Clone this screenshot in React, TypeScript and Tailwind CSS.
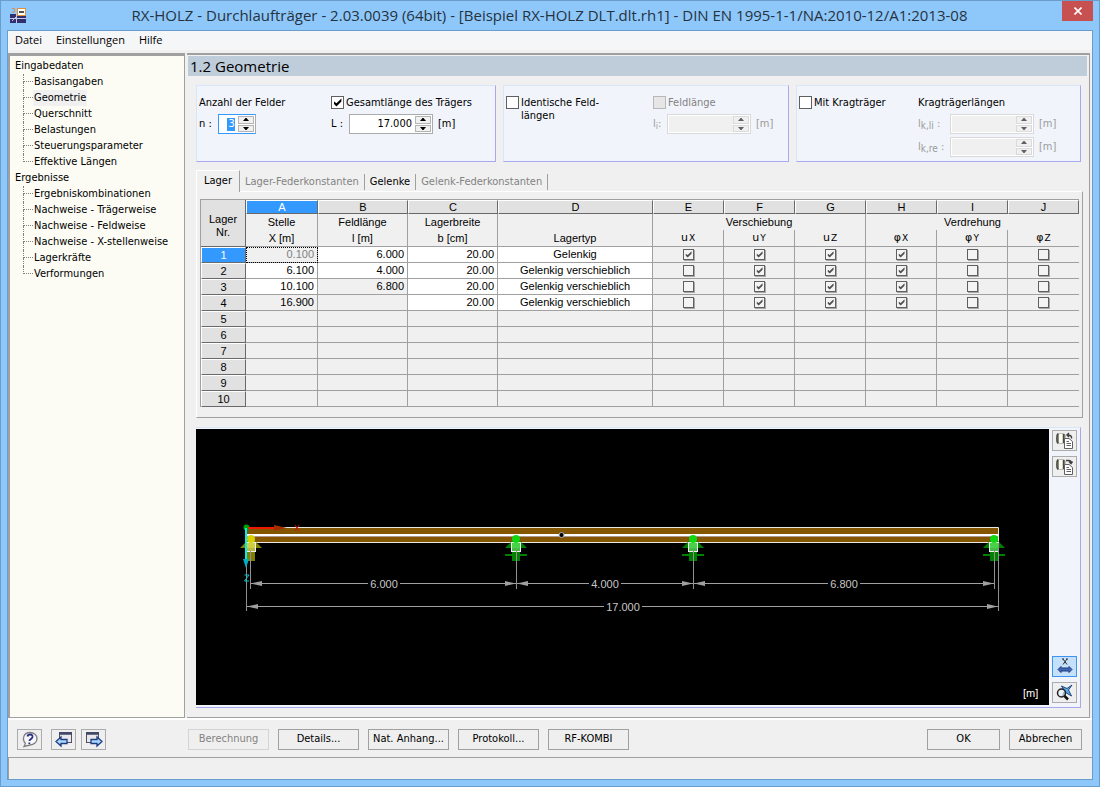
import { ReactNode } from "react";
import clsx from "clsx";

const TREE = [
  {
    label: "Eingabedaten",
    items: ["Basisangaben", "Geometrie", "Querschnitt", "Belastungen", "Steuerungsparameter", "Effektive Längen"],
  },
  {
    label: "Ergebnisse",
    items: [
      "Ergebniskombinationen",
      "Nachweise - Trägerweise",
      "Nachweise - Feldweise",
      "Nachweise - X-stellenweise",
      "Lagerkräfte",
      "Verformungen",
    ],
  },
];

interface SupportRow {
  x: string;
  span: string;
  width: string;
  type: string;
  fixed: boolean[];
}

const SUPPORTS: SupportRow[] = [
  { x: "0.100", span: "6.000", width: "20.00", type: "Gelenkig", fixed: [true, true, true, true, false, false] },
  { x: "6.100", span: "4.000", width: "20.00", type: "Gelenkig verschieblich", fixed: [false, true, true, true, false, false] },
  { x: "10.100", span: "6.800", width: "20.00", type: "Gelenkig verschieblich", fixed: [false, true, true, true, false, false] },
  { x: "16.900", span: "", width: "20.00", type: "Gelenkig verschieblich", fixed: [false, true, true, true, false, false] },
];

const LETTERS = ["A", "B", "C", "D", "E", "F", "G", "H", "I", "J"];
const DOFS = [["u", "X"], ["u", "Y"], ["u", "Z"], ["φ", "X"], ["φ", "Y"], ["φ", "Z"]];

function Tree() {
  return (
    <nav className="w-[177px] shrink-0 border-t-[3px] border-r border-b border-l-2 border-[#a0a0a0] bg-[#fcfcf4] pt-[2px] pl-[5px]">
      {TREE.map((group) => (
        <div key={group.label}>
          <div className="h-4 leading-4">{group.label}</div>
          <ul className="pl-2">
            {group.items.map((item, i) => (
              <li key={item} className="flex h-4 items-center leading-4">
                <span className="flex w-[10px] shrink-0 flex-col">
                  <span className="h-2 border-b border-l border-dotted border-[#808080]" />
                  <span className={clsx("h-2 border-dotted border-[#808080]", i < group.items.length - 1 && "border-l")} />
                </span>
                <a href="#" className={clsx("px-px whitespace-nowrap", item === "Geometrie" && "bg-[#f0f0f0]")}>
                  {item}
                </a>
              </li>
            ))}
          </ul>
        </div>
      ))}
    </nav>
  );
}

function CheckMark({ color, size }: { color: string; size: number }) {
  return (
    <svg width={size} height={size} viewBox="0 0 9 9" className="pointer-events-none [grid-area:1/1]">
      <path d="M1 3.5 L1 6 L3.5 8.4 L8.4 3.4 L8.4 0.4 L3.5 5.2 Z" fill={color} />
    </svg>
  );
}

function Check({ label, checked, disabled }: { label: ReactNode; checked?: boolean; disabled?: boolean }) {
  return (
    <label className={clsx("flex items-start gap-[2px] leading-[13px]", disabled && "text-[#838383]")}>
      <span className="grid place-items-center">
        <input
          type="checkbox"
          defaultChecked={checked}
          disabled={disabled}
          className="size-[13px] appearance-none border border-[#606060] bg-white [grid-area:1/1] disabled:border-[#b8b8b8] disabled:bg-[#e6e6e6]"
        />
        {checked && <CheckMark color="#000000" size={9} />}
      </span>
      <span className="whitespace-nowrap">{label}</span>
    </label>
  );
}

function Spinner({ label, value, wide, disabled, selected }: {
  label: string; value: string; wide?: boolean; disabled?: boolean; selected?: boolean;
}) {
  return (
    <span
      className={clsx(
        "flex h-5 shrink-0 border bg-white p-px",
        wide ? "w-[84px]" : "w-[38px]",
        disabled ? "border-[#d9d9d9]" : selected ? "border-t-[#3399ff] border-r-[#ababab] border-b-[#3399ff] border-l-[#3399ff]" : "border-[#ababab]",
      )}
    >
      <span className={clsx("flex min-w-0 flex-1 items-center justify-end pr-[3px]", disabled && "bg-[#f0f0f0]")}>
        <input
          aria-label={label}
          defaultValue={value}
          disabled={disabled}
          className={clsx("h-[13px] text-right outline-none", selected ? "w-2 bg-[#3399ff] text-white" : "w-full bg-transparent")}
        />
      </span>
      <span className="flex w-4 flex-col gap-px">
        {["M0 3 L2.500 0 H3.500 L6 3 Z", "M0 0 L2.500 3 H3.500 L6 0 Z"].map((d, i) => (
          <button
            key={d}
            type="button"
            disabled={disabled}
            aria-label={label + (i ? " verringern" : " erhöhen")}
            className="grid flex-1 place-items-center border border-[#b4b4b4] bg-[#f0f0f0] disabled:border-[#dadada]"
          >
            <svg width="6" height="3" viewBox="0 0 6 3">
              <path d={d} fill={disabled ? "#606060" : "#000000"} />
            </svg>
          </button>
        ))}
      </span>
    </span>
  );
}

function Group({ children }: { children: ReactNode }) {
  return (
    <section className="flex h-[77px] border border-t-[#d8e6f7] border-r-[#a8a8ee] border-b-[#a8a8ee] border-l-[#d8e6f7] bg-[#f1f4fa] pt-[10px] pl-[2px]">
      {children}
    </section>
  );
}

function Inputs() {
  return (
    <div className="grid grid-cols-[300fr_286fr_285fr] gap-[7px] pr-2 pl-2">
      <Group>
        <div className="w-[132px]">
          <div className="leading-[13px]">Anzahl der Felder</div>
          <div className="mt-[5px] flex items-center gap-[6px]">
            n :
            <Spinner label="Anzahl der Felder" value="3" selected />
          </div>
        </div>
        <div>
          <Check label="Gesamtlänge des Trägers" checked />
          <div className="mt-[5px] flex items-center gap-[5px]">
            <span className="w-[13px]">L :</span>
            <Spinner label="Gesamtlänge" value="17.000" wide />
            <span>[m]</span>
          </div>
        </div>
      </Group>
      <Group>
        <div className="w-[147px]">
          <Check label={<>Identische Feld-<br />längen</>} />
        </div>
        <div className="text-[#9b9b9b]">
          <Check label="Feldlänge" disabled />
          <div className="mt-[5px] flex items-center gap-[5px]">
            <span className="w-[9px] whitespace-nowrap">l<sub className="text-[9px]">i</sub>:</span>
            <Spinner label="Feldlänge" value="" wide disabled />
            <span>[m]</span>
          </div>
        </div>
      </Group>
      <Group>
        <div className="w-[119px]">
          <Check label="Mit Kragträger" />
        </div>
        <div>
          <div className="leading-[13px]">Kragträgerlängen</div>
          {["li", "re"].map((side) => (
            <div key={side} className="mt-[5px] mb-[-2px] flex items-center gap-[5px] text-[#9b9b9b]">
              <span className="w-[27px] whitespace-nowrap">l<sub className="text-[10px]">k,{side}</sub> :</span>
              <Spinner label={"Kragträgerlänge " + side} value="" wide disabled />
              <span>[m]</span>
            </div>
          ))}
        </div>
      </Group>
    </div>
  );
}

const headKey = "h-[14px] border border-t-white border-r-[#696969] border-b-[#696969] border-l-white p-0 leading-3 font-normal";
const subHead = "border-r border-[#a0a0a0] p-0 font-normal";
const cell = "h-4 border-r border-b border-[#a0a0a0] p-0 leading-[15px]";

function SupportTable() {
  return (
    <table className="w-full table-fixed border-separate border-spacing-0 border-t border-l border-[#a0a0a0] font-['Liberation_Sans',sans-serif] text-[11px]">
      <colgroup>
        <col className="w-[45px]" />
        <col className="w-[72px]" />
        <col className="w-[90px]" />
        <col className="w-[90px]" />
        <col className="w-[155px]" />
        {DOFS.map((d) => <col key={d.join("")} className="w-[71px]" />)}
      </colgroup>
      <thead>
        <tr>
          <th rowSpan={3} className="border-r border-b border-[#696969] bg-[#e1e1e1] p-0 pt-[6px] leading-[13px] font-normal">
            Lager<br />Nr.
          </th>
          {LETTERS.map((l) => (
            <th key={l} className={clsx(headKey, l === "A" ? "bg-[#3399ff] text-white" : "bg-[#e1e1e1]")}>{l}</th>
          ))}
        </tr>
        <tr>
          <th className={clsx(subHead, "h-4 leading-[14px]")}>Stelle</th>
          <th className={clsx(subHead, "leading-[14px]")}>Feldlänge</th>
          <th className={clsx(subHead, "leading-[14px]")}>Lagerbreite</th>
          <th className={subHead} />
          <th colSpan={3} className={clsx(subHead, "leading-[14px]")}>Verschiebung</th>
          <th colSpan={3} className="p-0 leading-[14px] font-normal">Verdrehung</th>
        </tr>
        <tr>
          {["X [m]", "l [m]", "b [cm]", "Lagertyp"].map((t) => (
            <th key={t} className={clsx(subHead, "h-[17px] border-b leading-[14px]")}>{t}</th>
          ))}
          {DOFS.map(([a, b]) => (
            <th key={a + b} className={clsx(subHead, "border-b font-['DejaVu_Sans',sans-serif] leading-[14px] last:border-r-0")}>
              <span className="inline-flex items-baseline gap-px">{a}<small className="text-[9px]">{b}</small></span>
            </th>
          ))}
        </tr>
      </thead>
      <tbody>
        {Array.from({ length: 10 }, (_, i) => {
          const row = SUPPORTS[i];
          return (
            <tr key={i}>
              <th
                scope="row"
                className={clsx(
                  "h-4 border border-t-white border-r-[#696969] border-b-[#696969] border-l-white p-0 leading-3 font-normal",
                  i === 0 ? "bg-[#3399ff] text-white" : "bg-[#e1e1e1]",
                )}
              >
                {i + 1}
              </th>
              <td
                className={clsx(
                  cell,
                  "text-right",
                  i === 0 && "text-[#808080] outline-1 outline-offset-[-1px] outline-black outline-dotted",
                  (i === 1 || i === 2) && "bg-white",
                )}
              >
                <span className="pr-[3px]">{row?.x}</span>
              </td>
              <td className={clsx(cell, "text-right", i < 2 && "bg-white")}><span className="pr-[3px]">{row?.span}</span></td>
              <td className={clsx(cell, "text-right", row && "bg-white")}><span className="pr-[3px]">{row?.width}</span></td>
              <td className={clsx(cell, "text-center", row && "bg-white")}>{row?.type}</td>
              {DOFS.map(([a, b], k) => (
                <td key={a + b} className={clsx(cell, "last:border-r-0")}>
                  {row && (
                    <span className="grid place-items-center">
                      <input
                        type="checkbox"
                        aria-label={`Lager ${i + 1} ${a}${b}`}
                        defaultChecked={row.fixed[k]}
                        className="size-[11px] appearance-none border border-[#606060] bg-[#f4f4f4] shadow-[1px_1px_0_#a8a8a8] [grid-area:1/1]"
                      />
                      {row.fixed[k] && <CheckMark color="#505050" size={7} />}
                    </span>
                  )}
                </td>
              ))}
            </tr>
          );
        })}
      </tbody>
    </table>
  );
}

function Tabs() {
  const tabs = ["Lager", "Lager-Federkonstanten", "Gelenke", "Gelenk-Federkonstanten"];
  return (
    <div className="mt-2 pr-[6px] pl-2">
      <div className="flex h-[21px] items-end" role="tablist">
        {tabs.map((t, i) => (
          <button
            key={t}
            type="button"
            role="tab"
            aria-selected={i === 0}
            disabled={i === 1 || i === 3}
            className={clsx(
              "border-r border-[#a0a0a0] whitespace-nowrap disabled:text-[#838383]",
              i === 0 ? "mb-[-1px] h-[22px] border-t border-l border-t-white border-l-white bg-[#f0f0f0] px-[7px]" : "mb-px h-4 px-[5px]",
            )}
          >
            {t}
          </button>
        ))}
      </div>
      <div className="border border-t-white border-r-[#a0a0a0] border-b-[#a0a0a0] border-l-white pt-[7px] pr-[3px] pb-[10px] pl-[3px]">
        <SupportTable />
      </div>
    </div>
  );
}

function Support({ x, color, dark, line }: { x: number; color: string; dark: string; line?: boolean }) {
  return (
    <g>
      <path d={`M${x} 108 L${x + 11} 119 H${x - 11} Z`} fill={dark} />
      <rect x={x - 4} y="122" width="8" height="10" fill={dark} />
      {line && <rect x={x - 11} y="125" width="22" height="2" fill={dark} />}
      <rect x={x - 4.5} y="113.500" width="9" height="9" fill={color} fillOpacity="0.75" stroke="#f0f0f0" />
      <rect x={x - 4} y="114" width="8" height="8" fill="#ffffff" fillOpacity="0.250" />
      <circle cx={x} cy="110" r="4" fill={color} />
    </g>
  );
}

function Dimension({ from, to, y, label }: { from: number; to: number; y: number; label: string }) {
  const mid = Math.round((from + to) / 2);
  const half = label.length > 5 ? 19 : 16;
  return (
    <g fill="#a0a0a0" stroke="none">
      <path d={`M${from} ${y}.5 H${mid - half} M${mid + half} ${y}.5 H${to}`} stroke="#a0a0a0" />
      <path d={`M${from} ${y}.5 l11 -2.500 v5 Z M${to} ${y}.5 l-11 -2.500 v5 Z`} />
      <text x={mid} y={y + 5} textAnchor="middle" fill="#c8c8c8" fontSize="11" fontFamily="Liberation Sans, sans-serif">{label}</text>
    </g>
  );
}

function BeamView() {
  return (
    <svg viewBox="0 0 853 276" className="block w-full min-w-0 flex-1 bg-black">
      <rect x="50" y="99" width="752" height="15" fill="#855600" />
      <path d="M50 98.500 H802.500 V114 M50 113.500 H803" fill="none" stroke="#e8e8e0" />
      <path d="M50 106 H802" stroke="#ffffff" strokeWidth="2" />
      <path d="M50 107.500 H802" stroke="#b09890" />
      <circle cx="365.500" cy="106" r="2.500" fill="#000000" stroke="#a8b8d0" />
      <Support x={55} color="#d8d000" dark="#808000" />
      <Support x={320} color="#10d810" dark="#008000" line />
      <Support x={497} color="#10d810" dark="#008000" line />
      <Support x={798} color="#10d810" dark="#008000" line />
      <path d="M50.500 136 V182 M54.500 122 V160 M320.500 122 V160 M497.500 122 V160 M798.500 122 V160 M802.500 114 V182" stroke="#909090" />
      <Dimension from={55} to={320} y={154} label="6.000" />
      <Dimension from={321} to={497} y={154} label="4.000" />
      <Dimension from={498} to={798} y={154} label="6.800" />
      <Dimension from={51} to={802} y={177} label="17.000" />
      <circle cx="50.500" cy="98.500" r="3" fill="#00a000" />
      <path d="M52 99 H81" stroke="#f01800" strokeWidth="2" />
      <path d="M78 96 L91 99 L78 102 Z" fill="#a03000" />
      <path d="M99 96 l4 6 M103 96 l-4 6" stroke="#d01000" />
      <path d="M50 99 V131" stroke="#00f0f0" strokeWidth="2" />
      <path d="M47 130 H53 L50 139 Z" fill="#00b0c0" />
      <path d="M48.500 146 H53 L48.500 152 H53" stroke="#00c8d0" fill="none" />
      <text x="827" y="268" fill="#ffffff" fontSize="11" fontFamily="Liberation Sans, sans-serif">[m]</text>
    </svg>
  );
}

function IconButton({ label, active, children }: { label: string; active?: boolean; children: ReactNode }) {
  return (
    <button
      type="button"
      aria-label={label}
      className={clsx(
        "grid h-[21px] w-[25px] shrink-0 place-items-center border",
        active ? "border-[#3c96f0] bg-[#c4e0fa]" : "border-[#acacac] bg-[#efefef]",
      )}
    >
      <svg width="18" height="17" viewBox="0 0 18 17" fill="none">{children}</svg>
    </button>
  );
}

function PrinterDoc({ up }: { up?: boolean }) {
  return (
    <>
      <rect x="0.500" y="1.500" width="9" height="10" rx="2" fill="#8c8c84" />
      <rect x="3" y="2" width="4" height="9" fill="#fffff0" />
      <path d="M2 1.500 C0.500 3 0.500 10 2 11.500 M7.500 2 V11" stroke="#484844" strokeWidth="1.500" />
      <path d="M8.500 6.500 H13 L16.500 9.500 V16.500 H8.500 Z" fill="#ffffff" stroke="#606060" />
      <path d="M10.500 9.500 H13 M10.500 11.500 H15 M10.500 13.500 H15" stroke="#606060" />
      <path
        d={up ? "M15.500 6.500 C16 3.500 14 3 11 3 M13 1 L11 3 L13 5" : "M10 2.500 H13 C15 2.500 15 4 15 5 M13 3.500 L15 5.500 L16.500 3.500"}
        stroke="#404040"
        strokeWidth="1.500"
      />
    </>
  );
}

function Graphic() {
  return (
    <div className="mt-[9px] mr-2 ml-2 flex border border-t-[#d8e6f7] border-r-[#a8a8ee] border-b-[#a8a8ee] border-l-0 bg-[#f1f4fa] pt-px pb-[2px]">
      <BeamView />
      <div className="flex flex-col gap-[5px] px-[3px] pt-px pb-[2px]">
        <IconButton label="Ansicht drucken"><PrinterDoc up /></IconButton>
        <IconButton label="Ansicht übernehmen"><PrinterDoc /></IconButton>
        <span className="flex-1" />
        <IconButton label="Bemaßung anzeigen" active>
          <path d="M7 1 L11 6.500 M11 1 L7 6.500 M6 1 H8 M10 1 H12" stroke="#303030" />
          <path d="M2 11.500 L5 8.500 V10 H13 V8.500 L16 11.500 L13 14.500 V13 H5 V14.500 Z" fill="#4068b8" stroke="#203878" />
        </IconButton>
        <IconButton label="Ansicht zoomen">
          <path d="M16 1 L12.500 6 L15.500 12 L10.500 9 L6.500 12 L8.500 7 L5.500 2 L11 4.500 Z" fill="#58a8e8" stroke="#204880" />
          <circle cx="5.500" cy="9" r="4" stroke="#202020" strokeWidth="1.500" fill="#e8f0f8" fillOpacity="0.6" />
          <path d="M8.500 12 L12 15.500" stroke="#101010" strokeWidth="2.500" />
        </IconButton>
      </div>
    </div>
  );
}

function PushButton({ children, disabled, small }: { children: ReactNode; disabled?: boolean; small?: boolean }) {
  return (
    <button
      type="button"
      disabled={disabled}
      className={clsx(
        "h-[21px] border border-[#a0a0a0] bg-[#efefef] whitespace-nowrap disabled:border-[#d4d4d4] disabled:text-[#838383]",
        small ? "w-[73px]" : "w-[81px]",
      )}
    >
      {children}
    </button>
  );
}

function Footer() {
  return (
    <footer className="flex h-[39px] items-center border-t-2 border-white pt-[2px] pr-[10px] pl-[9px]">
      <div className="flex w-[171px] gap-[9px]">
        <IconButton label="Hilfe">
          <path d="M9 1.500 C13 1.500 16 4 16 7.500 C16 11 13 14 9 14 L3 15.500 L4.500 12.500 C1 9 2 1.500 9 1.500 Z" fill="#f8f8fc" stroke="#808080" strokeWidth="1.300" />
          <path d="M6.500 5.500 C7 2.500 12 3 11.500 6 C11 8 8.500 8 8.500 10 M8.300 11.500 V13" stroke="#283080" strokeWidth="1.800" />
        </IconButton>
        <div className="flex gap-[5px]">
          <IconButton label="Vorherige Maske">
            <rect x="4.500" y="1.500" width="12" height="10" fill="#e8e8ec" stroke="#505060" />
            <path d="M4 2.500 H17" stroke="#404868" strokeWidth="2.500" />
            <path d="M1 10.500 L6 6 V8.500 H12 V12.500 H6 V15 Z" fill="#a8d8ff" stroke="#203c80" strokeWidth="1.300" />
          </IconButton>
          <IconButton label="Nächste Maske">
            <rect x="1.500" y="1.500" width="12" height="10" fill="#e8e8ec" stroke="#505060" />
            <path d="M1 2.500 H14" stroke="#404868" strokeWidth="2.500" />
            <path d="M17 10.500 L12 6 V8.500 H6 V12.500 H12 V15 Z" fill="#a8d8ff" stroke="#203c80" strokeWidth="1.300" />
          </IconButton>
        </div>
      </div>
      <div className="flex gap-[9px]">
        <PushButton disabled>Berechnung</PushButton>
        <PushButton>Details...</PushButton>
        <PushButton>Nat. Anhang...</PushButton>
        <PushButton>Protokoll...</PushButton>
        <PushButton>RF-KOMBI</PushButton>
      </div>
      <div className="ml-auto flex gap-[9px]">
        <PushButton small>OK</PushButton>
        <PushButton small>Abbrechen</PushButton>
      </div>
    </footer>
  );
}

function TitleBar() {
  return (
    <header className="flex h-[29px] items-start">
      <svg width="18" height="17" viewBox="0 0 18 17" className="mt-[6px] ml-[2px]">
        <rect x="1" y="7" width="16" height="9" fill="#303070" />
        <path d="M1 11.500 H17 M7.500 7 V16 M3 14 L8 9" stroke="#c8c8e0" />
        <rect x="8.500" y="1.500" width="8" height="7" fill="#fffff0" stroke="#e09040" />
        <path d="M10 5 H15" stroke="#505050" strokeWidth="2" />
        <path d="M3 1.500 H5.500 V5 H3" stroke="#d09050" fill="none" />
      </svg>
      <h1 className="flex-1 pl-[10px] text-center font-['Open_Sans',sans-serif] text-[15px] leading-[29px] whitespace-nowrap text-[#26323e]">
        RX-HOLZ - Durchlaufträger - 2.03.0039 (64bit) - [Beispiel RX-HOLZ DLT.dlt.rh1] - DIN EN 1995-1-1/NA:2010-12/A1:2013-08
      </h1>
      <button type="button" aria-label="Schließen" className="grid h-5 w-[31px] place-items-center bg-[#c75050]">
        <svg width="8" height="8" viewBox="0 0 8 8"><path d="M0.500 0.500 L7.500 7.500 M7.500 0.500 L0.500 7.500" stroke="#ffffff" strokeWidth="1.600" /></svg>
      </button>
    </header>
  );
}

export default function App() {
  return (
    <div className="flex min-h-screen flex-col border border-[#6a9dcb] bg-[#8ec8fb] px-[6px] pb-[6px] font-['DejaVu_Sans_Condensed',sans-serif] text-[11px] text-black">
      <TitleBar />
      <div className="flex flex-1 flex-col border border-[#6a9dcb] bg-[#f0f0f0]">
        <div className="flex h-[19px] items-center gap-[14px] bg-[#f5f6f7] pl-[7px] font-['Open_Sans',sans-serif]">
          {["Datei", "Einstellungen", "Hilfe"].map((m) => <a key={m} href="#">{m}</a>)}
        </div>
        <div className="mt-[3px] flex flex-1 gap-[2px]">
          <Tree />
          <main className="mr-[2px] flex min-w-0 flex-1 flex-col border-t-2 border-r border-b border-[#a0a0a0] pb-2 pl-px">
            <h2 className="mt-px mr-[2px] mb-[9px] h-5 bg-[#bfcddb] pl-[2px] font-['Open_Sans',sans-serif] text-[15px] leading-5">1.2 Geometrie</h2>
            <Inputs />
            <Tabs />
            <Graphic />
          </main>
        </div>
        <Footer />
        <div className="h-[22px] border-t border-l border-[#a0a0a0]" />
      </div>
    </div>
  );
}
